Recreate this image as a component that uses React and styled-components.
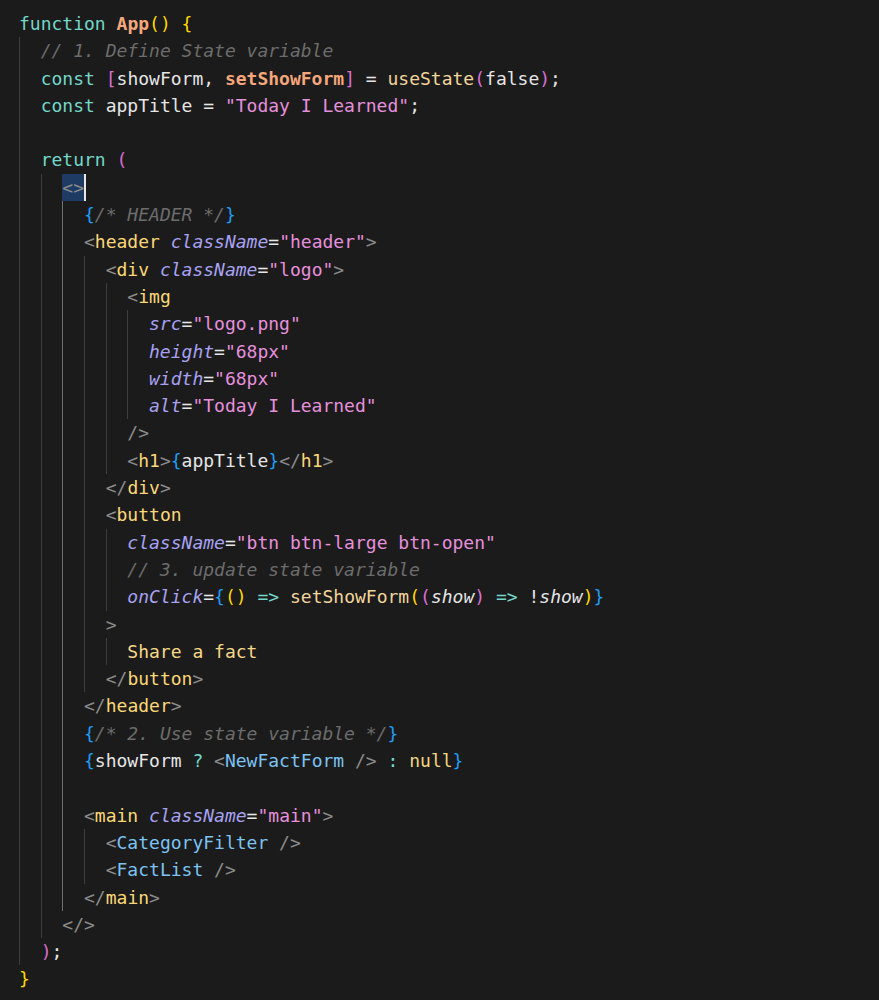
import React from "react";
import styled, { createGlobalStyle } from "styled-components";

const COLORS = {
  bg: "#1b1b1b",
  guide: "#3d3d3d",
  guideActive: "#6f6f6f",
  selection: "#1e3c63",
  caret: "#e8e8e8",
};

const TOKENS = {
  kw: { color: "#74d7c9" },
  op: { color: "#74d7c9" },
  fnBold: { color: "#f5a77c", weight: 700 },
  fn: { color: "#f2d59c" },
  id: { color: "#e6e6e6" },
  param: { color: "#e6e6e6", italic: true },
  cm: { color: "#6c6c6c", italic: true },
  str: { color: "#e690dd" },
  tag: { color: "#fbd878" },
  text: { color: "#f6d888" },
  attr: { color: "#a8a2f2", italic: true },
  pn: { color: "#8b8b8b" },
  comp: { color: "#7cc3f2" },
  nul: { color: "#f4d67f" },
  b1: { color: "#ffd700" },
  b2: { color: "#d86fd3" },
  b3: { color: "#1f9cf5" },
};

// each line: [indent in spaces, tokens]; plain strings render as identifiers
const LINES = [
  [0, [["kw", "function"], " ", ["fnBold", "App"], ["b1", "()"], " ", ["b1", "{"]]],
  [2, [["cm", "// 1. Define State variable"]]],
  [2, [["kw", "const"], " ", ["b2", "["], "showForm, ", ["fnBold", "setShowForm"], ["b2", "]"], " = ", ["fn", "useState"], ["b2", "("], "false", ["b2", ")"], ";"]],
  [2, [["kw", "const"], " appTitle = ", ["str", "\"Today I Learned\""], ";"]],
  [2, []],
  [2, [["kw", "return"], " ", ["b2", "("]]],
  [4, [["sel", "<>"]]],
  [6, [["b3", "{"], ["cm", "/* HEADER */"], ["b3", "}"]]],
  [6, [["pn", "<"], ["tag", "header"], " ", ["attr", "className"], "=", ["str", "\"header\""], ["pn", ">"]]],
  [8, [["pn", "<"], ["tag", "div"], " ", ["attr", "className"], "=", ["str", "\"logo\""], ["pn", ">"]]],
  [10, [["pn", "<"], ["tag", "img"]]],
  [12, [["attr", "src"], "=", ["str", "\"logo.png\""]]],
  [12, [["attr", "height"], "=", ["str", "\"68px\""]]],
  [12, [["attr", "width"], "=", ["str", "\"68px\""]]],
  [12, [["attr", "alt"], "=", ["str", "\"Today I Learned\""]]],
  [10, [["pn", "/>"]]],
  [10, [["pn", "<"], ["tag", "h1"], ["pn", ">"], ["b3", "{"], "appTitle", ["b3", "}"], ["pn", "</"], ["tag", "h1"], ["pn", ">"]]],
  [8, [["pn", "</"], ["tag", "div"], ["pn", ">"]]],
  [8, [["pn", "<"], ["tag", "button"]]],
  [10, [["attr", "className"], "=", ["str", "\"btn btn-large btn-open\""]]],
  [10, [["cm", "// 3. update state variable"]]],
  [10, [["attr", "onClick"], "=", ["b3", "{"], ["b1", "()"], " ", ["op", "=>"], " ", ["fn", "setShowForm"], ["b1", "("], ["b2", "("], ["param", "show"], ["b2", ")"], " ", ["op", "=>"], " !", ["param", "show"], ["b1", ")"], ["b3", "}"]]],
  [8, [["pn", ">"]]],
  [10, [["text", "Share a fact"]]],
  [8, [["pn", "</"], ["tag", "button"], ["pn", ">"]]],
  [6, [["pn", "</"], ["tag", "header"], ["pn", ">"]]],
  [6, [["b3", "{"], ["cm", "/* 2. Use state variable */"], ["b3", "}"]]],
  [6, [["b3", "{"], "showForm ", ["op", "?"], " ", ["pn", "<"], ["comp", "NewFactForm"], " ", ["pn", "/>"], " ", ["op", ":"], " ", ["nul", "null"], ["b3", "}"]]],
  [6, []],
  [6, [["pn", "<"], ["tag", "main"], " ", ["attr", "className"], "=", ["str", "\"main\""], ["pn", ">"]]],
  [8, [["pn", "<"], ["comp", "CategoryFilter"], " ", ["pn", "/>"]]],
  [8, [["pn", "<"], ["comp", "FactList"], " ", ["pn", "/>"]]],
  [6, [["pn", "</"], ["tag", "main"], ["pn", ">"]]],
  [4, [["pn", "</>"]]],
  [2, [["b2", ")"], ";"]],
  [0, [["b1", "}"]]],
];

// the fragment's children get the highlighted guide
const ACTIVE_LEVEL = 2;
const ACTIVE_FROM = 7;
const ACTIVE_TO = 32;

const GlobalStyle = createGlobalStyle`
  html, body {
    margin: 0;
    background: ${COLORS.bg};
  }
`;

const Editor = styled.div`
  min-height: 100vh;
  box-sizing: border-box;
  padding: 10px 0 0 19px;
  background: ${COLORS.bg};
  font-family: "DejaVu Sans Mono", "Liberation Mono", monospace;
  font-size: 18px;
  color: #e6e6e6;
`;

const Line = styled.div`
  display: flex;
  align-items: stretch;
  height: 27.3px;
  line-height: 27.3px;
  white-space: pre;
`;

const Guide = styled.span`
  flex: none;
  width: 2ch;
  box-sizing: border-box;
  border-left: 1px solid ${(p) => (p.$active ? COLORS.guideActive : COLORS.guide)};
`;

const Token = styled.span`
  color: ${(p) => TOKENS[p.$kind].color};
  font-style: ${(p) => (TOKENS[p.$kind].italic ? "italic" : "normal")};
  font-weight: ${(p) => TOKENS[p.$kind].weight || 400};
`;

const Selection = styled.span`
  color: ${TOKENS.pn.color};
  background: ${COLORS.selection};
`;

const Caret = styled.span`
  display: inline-block;
  width: 2px;
  background: ${COLORS.caret};
`;

const renderToken = (tok, i) => {
  if (typeof tok === "string") {
    return (
      <Token key={i} $kind="id">
        {tok}
      </Token>
    );
  }
  const [kind, text] = tok;
  if (kind === "sel") {
    return (
      <React.Fragment key={i}>
        <Selection>{text}</Selection>
        <Caret />
      </React.Fragment>
    );
  }
  return (
    <Token key={i} $kind={kind}>
      {text}
    </Token>
  );
};

const App = () => {
  return (
    <>
      <GlobalStyle />
      <Editor>
        {LINES.map(([indent, tokens], n) => (
          <Line key={n}>
            {Array.from({ length: indent / 2 }, (_, level) => (
              <Guide
                key={level}
                $active={
                  level === ACTIVE_LEVEL && n >= ACTIVE_FROM && n <= ACTIVE_TO
                }
              />
            ))}
            {tokens.map(renderToken)}
          </Line>
        ))}
      </Editor>
    </>
  );
};

export default App;
